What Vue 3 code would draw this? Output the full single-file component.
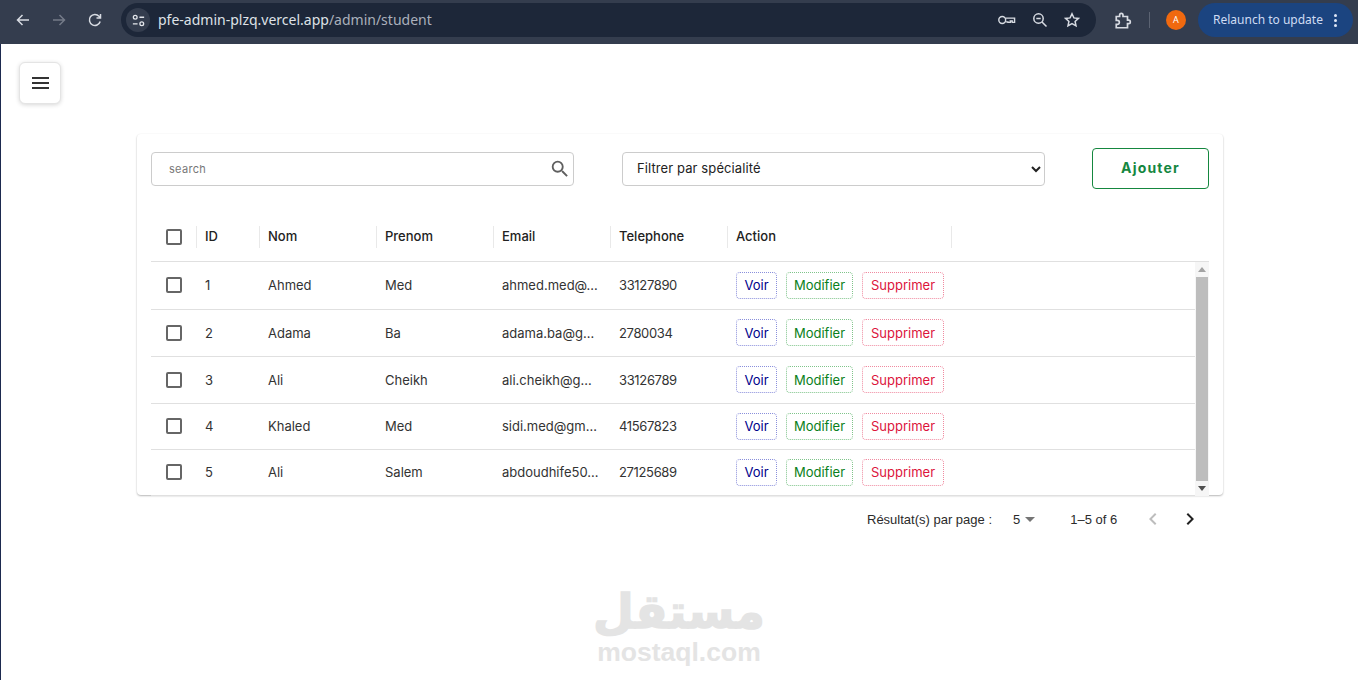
<script setup>
const students = [
  { id: 1, nom: 'Ahmed', prenom: 'Med', email: 'ahmed.med@…', tel: '33127890' },
  { id: 2, nom: 'Adama', prenom: 'Ba', email: 'adama.ba@g…', tel: '2780034' },
  { id: 3, nom: 'Ali', prenom: 'Cheikh', email: 'ali.cheikh@g…', tel: '33126789' },
  { id: 4, nom: 'Khaled', prenom: 'Med', email: 'sidi.med@gm…', tel: '41567823' },
  { id: 5, nom: 'Ali', prenom: 'Salem', email: 'abdoudhife50…', tel: '27125689' },
]
const columns = ['ID', 'Nom', 'Prenom', 'Email', 'Telephone', 'Action']
</script>

<template>
  <div class="screen">
    <header class="chrome">
      <div class="nav">
        <svg class="ic" viewBox="0 0 16 16"><path d="M14 8H3M7.5 3L2.500 8l5 5" /></svg>
        <svg class="ic dim" viewBox="0 0 16 16"><path d="M2 8h11M8.500 3l5 5-5 5" /></svg>
        <svg class="ic" viewBox="0 0 16 16"><path d="M13.200 9.500A5.500 5.500 0 1 1 12 4.200L13.500 6M13.500 2v4h-4" /></svg>
      </div>
      <div class="omnibox">
        <span class="tune">
          <svg viewBox="0 0 16 16"><circle cx="4.500" cy="4.500" r="2" /><path d="M9 4.500h5M2 11.500h5" /><circle cx="11.500" cy="11.500" r="2" /></svg>
        </span>
        <span class="url">pfe-admin-plzq.vercel.app<span class="path">/admin/student</span></span>
        <span class="omni-icons">
          <svg class="ic key" viewBox="0 0 20 16"><circle cx="5.500" cy="8" r="3.600" /><path d="M9 6h9.500v4.500h-2.500V9h-2v1.500h-2.500V10H9" /></svg>
          <svg class="ic" viewBox="0 0 16 16"><circle cx="6.500" cy="6.500" r="4.700" /><path d="M10 10l4.500 4.500M4.300 6.500h4.400" /></svg>
          <svg class="ic" viewBox="0 0 16 16"><path d="M8 1.800l1.900 4.100 4.500.5-3.300 3 .9 4.400L8 11.600l-4 2.200.9-4.400-3.300-3 4.500-.5z" /></svg>
        </span>
      </div>
      <svg class="ic puzzle" viewBox="0 0 16 16"><path d="M2 4h3V2.800a1.500 1.500 0 0 1 3 0V4h4v3.300h1a1.500 1.500 0 0 1 0 3h-1V14H2v-3h1a1.500 1.500 0 0 0 0-3.500H2z" /></svg>
      <span class="sep"></span>
      <span class="avatar">A</span>
      <div class="relaunch">
        <span>Relaunch to update</span>
        <span class="kebab"><i></i><i></i><i></i></span>
      </div>
    </header>

    <main class="page">
      <button class="menu-btn" aria-label="menu">
        <span></span><span></span><span></span>
      </button>

      <section class="card">
        <div class="filters">
          <label class="search">
            <input type="text" placeholder="search" />
            <svg viewBox="0 0 24 24"><path d="M15.500 14h-.79l-.28-.27A6.470 6.470 0 0 0 16 9.500 6.500 6.500 0 1 0 9.500 16c1.610 0 3.090-.59 4.230-1.570l.27.28v.79l5 4.990L20.490 19l-4.990-5zm-6 0C7.010 14 5 11.990 5 9.500S7.010 5 9.500 5 14 7.010 14 9.500 11.990 14 9.500 14z" /></svg>
          </label>
          <select class="speciality">
            <option>Filtrer par spécialité</option>
          </select>
          <button class="add">Ajouter</button>
        </div>

        <div class="grid">
          <div class="head">
            <div class="cell check"><span class="box"></span></div>
            <div v-for="c in columns" :key="c" class="cell title">{{ c }}</div>
          </div>
          <div class="body">
            <div class="rows">
              <div v-for="s in students" :key="s.id" class="row">
                <div class="cell check"><span class="box"></span></div>
                <div class="cell">{{ s.id }}</div>
                <div class="cell">{{ s.nom }}</div>
                <div class="cell">{{ s.prenom }}</div>
                <div class="cell">{{ s.email }}</div>
                <div class="cell tel">{{ s.tel }}</div>
                <div class="cell actions">
                  <button class="act voir">Voir</button>
                  <button class="act modifier">Modifier</button>
                  <button class="act supprimer">Supprimer</button>
                </div>
              </div>
            </div>
            <div class="scrollbar">
              <span class="arrow up"></span>
              <span class="thumb"></span>
              <span class="arrow down"></span>
            </div>
          </div>
        </div>
      </section>

      <footer class="pager">
        <span class="per-label">Résultat(s) par page :</span>
        <span class="per-value">5<i class="caret"></i></span>
        <span class="range">1–5 of 6</span>
        <svg class="chev off" viewBox="0 0 24 24"><path d="M15.410 7.410 14 6l-6 6 6 6 1.410-1.410L10.830 12z" /></svg>
        <svg class="chev" viewBox="0 0 24 24"><path d="M10 6 8.590 7.410 13.170 12l-4.580 4.590L10 18l6-6z" /></svg>
      </footer>

      <div class="watermark">
        <div class="wm-ar" lang="ar" dir="rtl">مستقل</div>
        <div class="wm-en">mostaql.com</div>
      </div>
    </main>
  </div>
</template>

<style>
html, body { margin: 0; background: #fff; overflow: hidden; }
</style>

<style scoped>
.screen {
  width: 1358px;
  height: 680px;
  overflow: hidden;
  display: flex;
  flex-direction: column;
  font-family: Inter, "Liberation Sans", sans-serif;
  color: #222;
}
.chrome {
  height: 44px;
  flex: none;
  background: #343d4e;
  display: flex;
  align-items: flex-start;
  box-sizing: border-box;
  padding-top: 3px;
}
.ic {
  width: 16px;
  height: 16px;
  fill: none;
  stroke: #d7dbe2;
  stroke-width: 1.500;
  flex: none;
}
.ic.dim { stroke: #747b88; }
.nav {
  display: flex;
  gap: 20px;
  padding: 9px 0 0 15px;
  width: 121px;
  flex: none;
  box-sizing: border-box;
}
.omnibox {
  width: 975px;
  height: 34px;
  flex: none;
  border-radius: 17px;
  background: #1d2739;
  display: flex;
  align-items: center;
  padding: 0 16px 0 5px;
  box-sizing: border-box;
}
.tune {
  width: 24px;
  height: 24px;
  border-radius: 50%;
  background: #343d4e;
  display: flex;
  align-items: center;
  justify-content: center;
}
.tune svg {
  width: 15px;
  height: 15px;
  fill: none;
  stroke: #e4e7ec;
  stroke-width: 1.400;
}
.url {
  margin-left: 8px;
  font: 14px/1 "Noto Sans", sans-serif;
  color: #dfe2e7;
}
.path { color: #aab0bb; }
.omni-icons {
  margin-left: auto;
  display: flex;
  align-items: center;
  gap: 16px;
}
.key { width: 19px; height: 16px; }
.puzzle { margin: 9px 0 0 18px; width: 18px; height: 18px; }
.sep {
  width: 1px;
  height: 16px;
  background: #5b6372;
  margin: 9px 0 0 17px;
}
.avatar {
  width: 20px;
  height: 20px;
  border-radius: 50%;
  background: #f0690f;
  color: #fff;
  font: 9px/20px "Noto Sans", sans-serif;
  text-align: center;
  margin: 7px 0 0 16px;
}
.relaunch {
  width: 155px;
  height: 34px;
  border-radius: 17px;
  background: #1b4480;
  margin-left: 12px;
  display: flex;
  align-items: center;
  padding-left: 15px;
  box-sizing: border-box;
  font: 12px/1 "Noto Sans", sans-serif;
  color: #cfdcf3;
}
.kebab {
  display: flex;
  flex-direction: column;
  gap: 2px;
  margin-left: 11px;
}
.kebab i {
  width: 3px;
  height: 3px;
  border-radius: 50%;
  background: #dfe7f6;
}

.page {
  position: relative;
  flex: 1;
  border-left: 1px solid #1d2a4f;
  padding: 18px 0 0 18px;
  box-sizing: border-box;
}
.menu-btn {
  width: 42px;
  height: 42px;
  background: #fff;
  border: 1px solid #e4e4e4;
  border-radius: 6px;
  box-shadow: 0 1px 4px rgba(0, 0, 0, .16);
  display: flex;
  flex-direction: column;
  align-items: center;
  justify-content: center;
  gap: 3px;
  padding: 0;
}
.menu-btn span {
  width: 17px;
  height: 2px;
  background: #333;
}
.card {
  width: 1086px;
  height: 361px;
  margin: 30px 0 0 118px;
  box-sizing: border-box;
  padding: 14px 14px 0;
  border-radius: 4px;
  box-shadow: 0 1px 2px rgba(0, 0, 0, .28), 0 0 2px rgba(0, 0, 0, .03);
}
.filters {
  height: 41px;
  display: flex;
  align-items: center;
}
.search {
  width: 423px;
  height: 34px;
  border: 1px solid #ccc;
  border-radius: 4px;
  box-sizing: border-box;
  display: flex;
  align-items: center;
  padding: 0 0 0 17px;
}
.search input {
  flex: 1;
  border: 0;
  outline: 0;
  padding: 0;
  min-width: 0;
  font: 11px Inter, sans-serif;
  letter-spacing: .3px;
}
.search input::placeholder { color: #777; }
.search svg {
  width: 22px;
  height: 22px;
  fill: #5f5f5f;
  margin-right: 2px;
}
.speciality {
  width: 423px;
  height: 34px;
  margin-left: 48px;
  border: 1px solid #ccc;
  border-radius: 4px;
  background: #fff;
  padding: 0 10px 2px;
  font: 13px Inter, sans-serif;
  letter-spacing: .1px;
  color: #222;
}
.add {
  width: 117px;
  height: 41px;
  margin-left: 47px;
  padding: 0 0 2px;
  border: 1px solid #15873f;
  border-radius: 4px;
  background: #fff;
  color: #15873f;
  font: 700 14px Inter, sans-serif;
  letter-spacing: 1.200px;
}

.grid { margin-top: 23px; }
.head, .row {
  display: grid;
  grid-template-columns: 45px 63px 117px 117px 117px 117px 225px;
}
.head {
  height: 50px;
  border-bottom: 1px solid #e0e0e0;
  box-sizing: border-box;
  align-items: center;
}
.cell {
  display: flex;
  align-items: center;
  padding: 0 9px;
  box-sizing: border-box;
  font-size: 13px;
  color: #333;
  min-width: 0;
  white-space: nowrap;
}
.title {
  height: 22px;
  border-left: 1px solid #e9e9e9;
  padding: 0 8px 1px;
  font-weight: 500;
  color: #222;
}
.title:last-child { border-right: 1px solid #e9e9e9; }
.check { padding: 0 0 0 15px; }
.tel { letter-spacing: -.35px; }
.box {
  width: 12px;
  height: 12px;
  border: 2px solid #666;
  border-radius: 2px;
  display: block;
}
.body {
  display: flex;
  height: 234px;
}
.rows { flex: 1; min-width: 0; }
.row {
  height: 46px;
  border-bottom: 1px solid #e0e0e0;
  box-sizing: border-box;
  padding-bottom: 1px;
}
.row:nth-child(1) { height: 48px; }
.row:nth-child(2), .row:nth-child(3) { height: 47px; }
.actions { gap: 9px; }
.act {
  height: 27px;
  padding: 0;
  background: #fff;
  border-radius: 4px;
  border: 1px dotted;
  font: 13px Inter, sans-serif;
  flex: none;
}
.voir { width: 41px; color: #00008b; border-color: #8a8fdc; }
.modifier { width: 67px; color: #0a8020; border-color: #7fc48a; }
.supprimer { width: 82px; color: #dc143c; border-color: #f08aa0; }
.scrollbar {
  width: 14px;
  flex: none;
  background: #f6f6f6;
  display: flex;
  flex-direction: column;
  align-items: center;
}
.thumb {
  flex: 1;
  width: 12px;
  background: #bdbdbd;
}
.arrow {
  height: 15px;
  width: 100%;
  flex: none;
  display: flex;
  align-items: center;
  justify-content: center;
}
.arrow::before {
  content: "";
  border-left: 4px solid transparent;
  border-right: 4px solid transparent;
}
.arrow.up::before { border-bottom: 5px solid #a3a3a3; }
.arrow.down::before { border-top: 5px solid #505050; }

.pager {
  margin: 14px 0 0 848px;
  width: 340px;
  height: 20px;
  display: flex;
  align-items: center;
  font: 13px "Liberation Sans", sans-serif;
  color: #2b2b2b;
}
.per-value {
  margin-left: 21px;
  display: flex;
  align-items: center;
}
.caret {
  margin-left: 5px;
  border-left: 5px solid transparent;
  border-right: 5px solid transparent;
  border-top: 5px solid #757575;
}
.range { margin-left: 35px; }
.chev {
  width: 24px;
  height: 24px;
  fill: #222;
  margin-left: 13px;
  flex: none;
}
.chev.off {
  fill: #bdbdbd;
  margin-left: 24px;
}
.watermark {
  position: absolute;
  left: 578px;
  top: 541px;
  width: 200px;
  text-align: center;
  color: #e4e4e4;
}
.wm-ar {
  font: 700 47px/53px "DejaVu Sans", sans-serif;
  -webkit-text-stroke: 1.500px #e4e4e4;
}
.wm-en {
  font: 700 26.500px/28px "Liberation Sans", sans-serif;
}
</style>
